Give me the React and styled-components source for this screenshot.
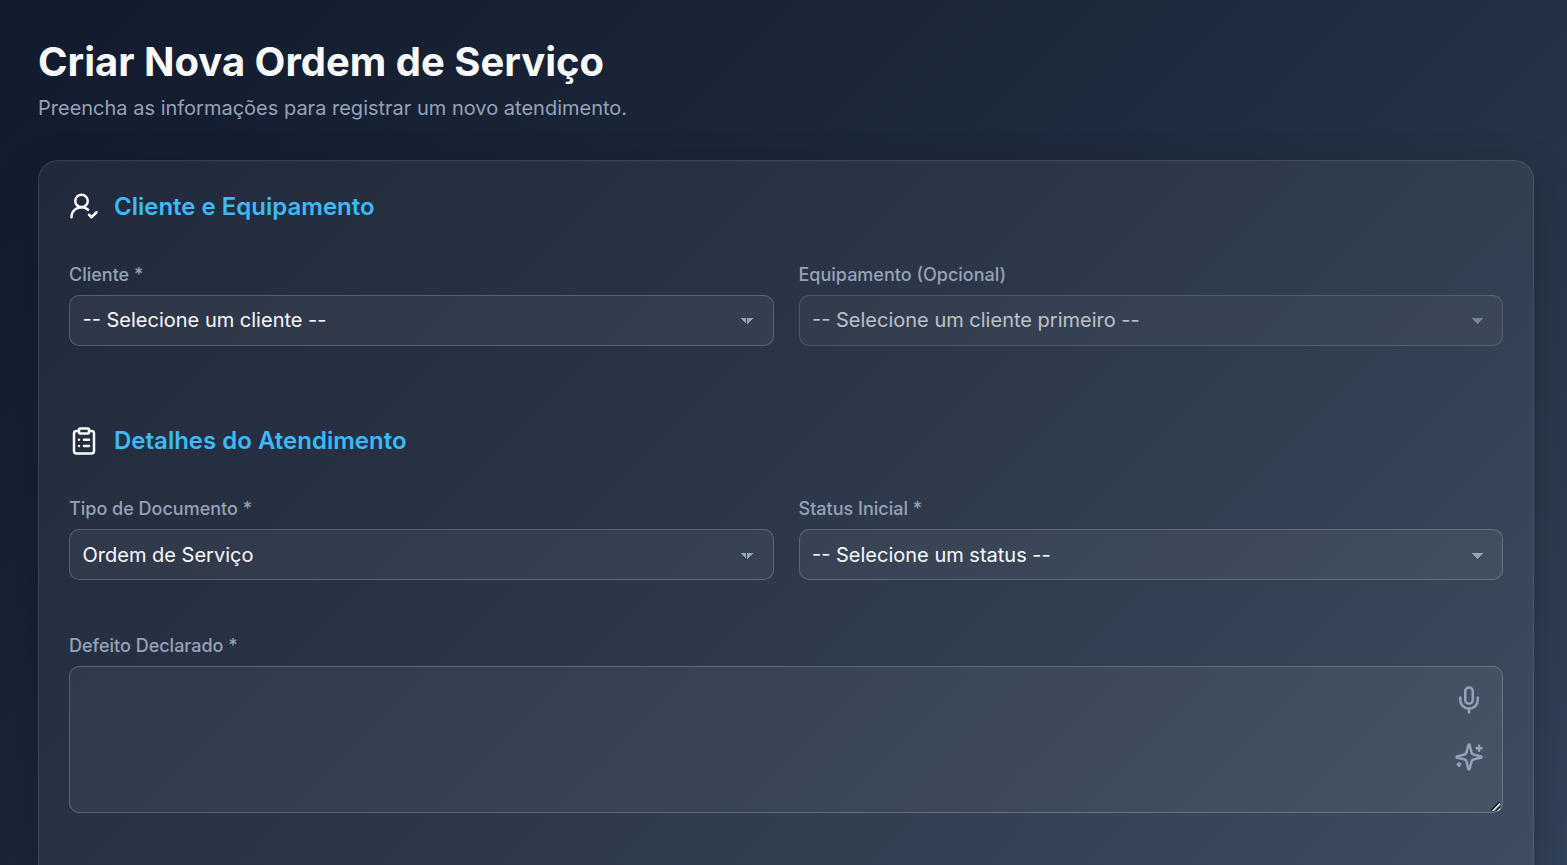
import React from 'react';
import styled, { createGlobalStyle } from 'styled-components';
import { ClipboardList, Mic, UserRoundCheck } from 'lucide-react';

const GlobalStyle = createGlobalStyle`
* {
  box-sizing: border-box;
}

body {
  margin: 0;
  overflow: hidden;
  font-family: Inter, sans-serif;
}
`

const Page = styled.main`
  height: 865px;
  overflow: hidden;
  padding: 37px 33px 0 38px;
  background: linear-gradient(135deg, #121a2d 0%, #1e2a3d 50%, #324257 100%);
  color: #f8fafc;
`

const Title = styled.h1`
  margin: 0;
  font-size: 40px;
  line-height: 50px;
  font-weight: 700;
`

const Subtitle = styled.p`
  margin: 6px 0 0;
  font-size: 20px;
  line-height: 30px;
  color: #94a3b8;
`

const Card = styled.form`
  height: 1000px;
  margin-top: 37px;
  padding: 25px 30px;
  border: 1px solid rgba(255, 255, 255, 0.1);
  border-radius: 20px;
  background: rgba(255, 255, 255, 0.06);
  box-shadow: 0 10px 40px rgba(0, 0, 0, 0.2);
`

const SectionTitle = styled.h2`
  display: flex;
  align-items: center;
  gap: 15px;
  height: 41px;
  margin: 0 0 34px;
  font-size: 24px;
  font-weight: 600;
  color: #38bdf8;

  svg {
    color: #f8fafc;
    margin-bottom: ${(props) => (props.$raised ? 2 : 0)}px;
  }
`

const Row = styled.div`
  display: grid;
  grid-template-columns: 1fr 1fr;
  gap: 25px;
  margin-bottom: ${(props) => props.$space}px;
`

const Field = styled.div`
  display: flex;
  flex-direction: column;
`

const Label = styled.label`
  height: 34px;
  padding-top: 3px;
  font-size: 18px;
  line-height: 22px;
  font-weight: 500;
  color: #94a3b8;
`

const SelectBox = styled.div`
  position: relative;
  height: 51px;
  opacity: ${(props) => (props.$disabled ? 0.7 : 1)};

  svg {
    position: absolute;
    top: ${(props) => (props.$low ? 24 : 23)}px;
    right: ${(props) => (props.$split ? 20.5 : 19.5)}px;
  }
`

const Select = styled.select`
  appearance: none;
  width: 100%;
  height: 100%;
  padding: 0 40px ${(props) => (props.$low ? 0 : 2)}px 12.5px;
  border: 1px solid rgba(255, 255, 255, 0.2);
  border-radius: 10px;
  background: rgba(255, 255, 255, 0.05);
  font-family: inherit;
  font-size: 20px;
  color: #f8fafc;
  opacity: 1;
`

const TextBox = styled.div`
  position: relative;
  height: 147px;
`

const TextArea = styled.textarea`
  display: block;
  width: 100%;
  height: 100%;
  resize: none;
  border: 1px solid rgba(255, 255, 255, 0.2);
  border-radius: 10px;
  background: rgba(255, 255, 255, 0.05);
  color: #f8fafc;
`

const Tools = styled.div`
  position: absolute;
  top: 19px;
  right: 19px;
  display: flex;
  flex-direction: column;
  gap: 27px;
`

const ToolButton = styled.button`
  display: flex;
  padding: 0;
  border: 0;
  background: none;
  color: #94a3b8;
`

const Grip = styled.svg`
  position: absolute;
  right: 2px;
  bottom: 2px;
`

function Arrow({ split }) {
  return (
    <svg width='13' height='6' viewBox='0 0 13 6' shapeRendering='crispEdges' fill='#94a3b8'>
      {split ? <path d='M0 0h6v6zM7 0h6l-6 6z' /> : <path d='M0 0h12.5l-6.25 6z' />}
    </svg>
  )
}

function Sparkles() {
  return (
    <svg width='30' height='30' viewBox='0 0 24 24' fill='none' stroke='currentColor' strokeWidth='2' strokeLinecap='round' strokeLinejoin='round'>
      <path d='M9.937 15.5A2 2 0 0 0 8.5 14.063l-6.135-1.582a.5.5 0 0 1 0-.962L8.5 9.936A2 2 0 0 0 9.937 8.5l1.582-6.135a.5.5 0 0 1 .963 0L14.063 8.5A2 2 0 0 0 15.5 9.937l6.135 1.581a.5.5 0 0 1 0 .964L15.5 14.063a2 2 0 0 0-1.437 1.437l-1.582 6.135a.5.5 0 0 1-.963 0z' />
      <path d='M20 3v4M22 5h-4M4 17v2M5 18H3' />
    </svg>
  )
}

function SelectField({ label, name, text, disabled, split, low }) {
  return (
    <Field>
      <Label htmlFor={name}>{label}</Label>
      <SelectBox $disabled={disabled} $split={split} $low={low}>
        <Select id={name} name={name} disabled={disabled} $low={low}>
          <option>{text}</option>
        </Select>
        <Arrow split={split} />
      </SelectBox>
    </Field>
  )
}

function App() {
  return (
    <Page>
      <GlobalStyle />
      <Title>Criar Nova Ordem de Serviço</Title>
      <Subtitle>Preencha as informações para registrar um novo atendimento.</Subtitle>

      <Card>
        <SectionTitle $raised><UserRoundCheck size={30} />Cliente e Equipamento</SectionTitle>
        <Row $space={74}>
          <SelectField label='Cliente *' name='cliente' text='-- Selecione um cliente --' split />
          <SelectField label='Equipamento (Opcional)' name='equipamento' text='-- Selecione um cliente primeiro --' disabled />
        </Row>

        <SectionTitle><ClipboardList size={30} />Detalhes do Atendimento</SectionTitle>
        <Row $space={52}>
          <SelectField label='Tipo de Documento *' name='tipo' text='Ordem de Serviço' split low />
          <SelectField label='Status Inicial *' name='status' text='-- Selecione um status --' low />
        </Row>

        <Field>
          <Label htmlFor='defeito'>Defeito Declarado *</Label>
          <TextBox>
            <TextArea id='defeito' name='defeito' />
            <Tools>
              <ToolButton type='button'><Mic size={30} /></ToolButton>
              <ToolButton type='button'><Sparkles /></ToolButton>
            </Tools>
            <Grip width='10' height='9' viewBox='0 0 10 9'>
              <path d='M1.5 9L9 1.5M6 9l3-3' stroke='#dcdcdc' strokeWidth='2' />
              <path d='M0 8.5L8.5 0M5 9L9 5' stroke='#15181e' strokeWidth='1.3' />
            </Grip>
          </TextBox>
        </Field>
      </Card>
    </Page>
  )
}

export default App;
